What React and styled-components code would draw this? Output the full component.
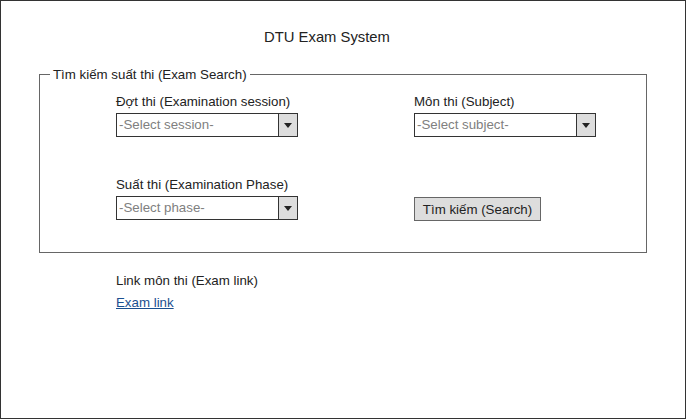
import React from 'react'
import styled, { createGlobalStyle } from 'styled-components'

const Global = createGlobalStyle`
  html, body { margin: 0; padding: 0; background: #fff; }
  body { font-family: "Liberation Sans", Arial, sans-serif; color: #222; }
  * { box-sizing: border-box; }
`

// marco exterior de la pagina
const Frame = styled.div`
  width: 686px;
  height: 419px;
  border: 1px solid #333;
  padding-top: 28px;
`

const Title = styled.h1`
  margin: 0;
  padding-right: 32px;
  text-align: center;
  font-size: 14.8px;
  line-height: 17px;
  font-weight: normal;
  color: #222;
`

const Fieldset = styled.fieldset`
  margin: 21px 38px 0;
  padding: 0;
  border: 1px solid #666;
`

const Legend = styled.legend`
  margin-left: 10px;
  padding: 0 3px;
  font-size: 13.3px;
  line-height: 15px;
  color: #222;
`

const Grid = styled.div`
  display: grid;
  grid-template-columns: 298px 1fr;
  row-gap: 40px;
  padding: 12px 0 32px 76px;
`

const Field = styled.div`
  display: flex;
  flex-direction: column;
  align-items: flex-start;
  justify-content: flex-end;
`

const Label = styled.label`
  font-size: 13.3px;
  line-height: 16px;
  margin-bottom: 3px;
  color: #222;
`

const Select = styled.div`
  display: flex;
  width: 182px;
  height: 24px;
  border: 1px solid #333;
  background: #fff;
`

const Placeholder = styled.span`
  flex: 1;
  padding-left: 2px;
  font-size: 13.3px;
  line-height: 22px;
  color: #808080;
`

const Arrow = styled.span`
  width: 19px;
  border-left: 1px solid #333;
  background: #ddd;
  display: flex;
  align-items: center;
  justify-content: center;

  &::after {
    content: '';
    border-left: 4.5px solid transparent;
    border-right: 4.5px solid transparent;
    border-top: 5px solid #222;
    margin-top: 1px;
  }
`

const Button = styled.button`
  width: 127px;
  height: 24px;
  margin-bottom: -1px;
  padding: 0;
  border: 1px solid #666;
  background: #ddd;
  font-family: inherit;
  font-size: 13.3px;
  color: #222;
`

const LinkBlock = styled.div`
  padding: 20px 0 0 115px;
`

const LinkLabel = styled.div`
  font-size: 13.3px;
  line-height: 16px;
  margin-bottom: 4px;
`

const ExamLink = styled.a`
  font-size: 13.3px;
  line-height: 16px;
  color: #1a4f8f;
  text-decoration: underline;
`

const Dropdown = ({ label, placeholder }) => (
  <Field>
    <Label>{label}</Label>
    <Select>
      <Placeholder>{placeholder}</Placeholder>
      <Arrow />
    </Select>
  </Field>
)

const App = () => {
  return (
    <>
      <Global />
      <Frame>
        <Title>DTU Exam System</Title>
        <Fieldset>
          <Legend>Tìm kiếm suất thi (Exam Search)</Legend>
          <Grid>
            <Dropdown label="Đợt thi (Examination session)" placeholder="-Select session-" />
            <Dropdown label="Môn thi (Subject)" placeholder="-Select subject-" />
            <Dropdown label="Suất thi (Examination Phase)" placeholder="-Select phase-" />
            <Field>
              <Button>Tìm kiếm (Search)</Button>
            </Field>
          </Grid>
        </Fieldset>
        <LinkBlock>
          <LinkLabel>Link môn thi (Exam link)</LinkLabel>
          <ExamLink href="#">Exam link</ExamLink>
        </LinkBlock>
      </Frame>
    </>
  )
}

export default App
